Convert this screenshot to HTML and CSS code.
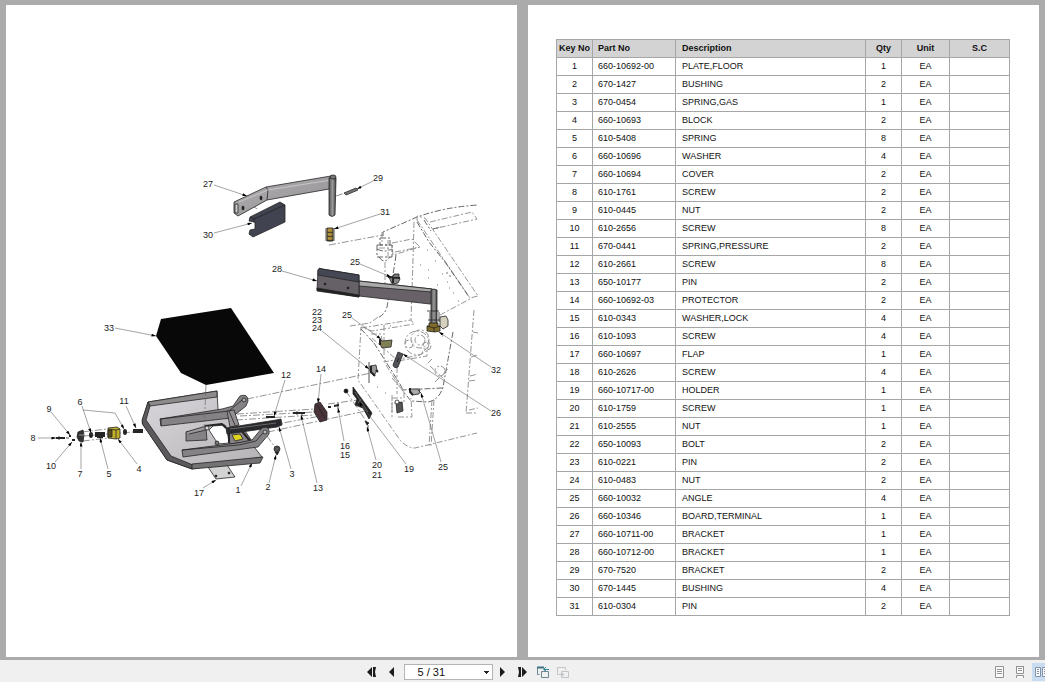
FILE: index.html
```html
<!DOCTYPE html>
<html lang="en">
<head>
<meta charset="utf-8">
<meta name="viewport" content="width=device-width, initial-scale=1">
<title>Parts manual</title>
<link rel="stylesheet" href="styles.css">
</head>
<body>
<main class="viewer">
<section class="page" aria-label="Exploded view">
<svg class="drawing" viewBox="6 5 511 652" role="img" aria-label="Exploded parts drawing">
  <defs>
    <marker id="arrow" viewBox="0 0 6 4" refX="6" refY="2" markerWidth="5" markerHeight="3" markerUnits="userSpaceOnUse" orient="auto"><path d="M0 0L6 2L0 4z"/></marker>
    <linearGradient id="steel" x1="0" y1="0" x2="1" y2="1"><stop offset="0" stop-color="#b3b0b3"/><stop offset="1" stop-color="#918e91"/></linearGradient>
    <linearGradient id="post"><stop offset="0" stop-color="#555"/><stop offset=".5" stop-color="#999"/><stop offset="1" stop-color="#444"/></linearGradient>
    <linearGradient id="floor" x1="0" y1="0" x2="1" y2="1"><stop offset="0" stop-color="#d9d7dc"/><stop offset="1" stop-color="#b5b2b4"/></linearGradient>
  </defs>

  <!-- machine frame -->
  <g class="frame">
    <path class="heavy" d="M383 236v-4L417 217Q445 207 478 205"/>
    <path d="M430 222L472 212L477 219L433 229M417 220L470 298L478 296L425 218L417 216z"/>
    <path class="heavy" d="M417 222L429 242L445 262L469 297M424 220L431 231M433 229l8-2"/>
    <path d="M414 222L413 260L411 320M392 243L412 239L420 247L393 255zM395 252l25-5M440 315L470 299"/>
    <path class="heavy" d="M377 245h15v12h-15zM380 238h10v7h-10zM379 257q5 8 11 0M377 249q7 4 15 0"/>
    <path d="M385 262v35M379 248h12M382 232v10M388 240v18"/>
    <path class="heavy" d="M396 255Q394 270 391 284L387 307Q384 316 377 318"/>
    <path d="M350 326L370 323L378 317M361 328L411 320L414 324L372 331L361 327L358 380L400 440Q407 448 415 448L477 433"/>
    <path class="heavy" d="M361 329L374 343M374 343L400 384L403 390M453 332L443 387Q439 400 428 402L411 401L402 390L442 388"/>
    <path d="M432 400L429 446M434 400L431 446M371 334h10l2 12M384 325v37L420 355L428 347L422 352M372 338l26 23L427 356v-8M397 367v27M392 378l12 14M404 392v11h-10M392 395v22M398 417h14l-1-19M386 365l14 22"/>
    <path d="M474 310L466 413M473 332l5 1M471 357l7-2M470 376l8-2M469 381l8-1M466 413h12M469 410l9-2"/>
    <circle cx="420" cy="339" r="9"/><circle cx="417" cy="343" r="12"/><circle cx="420" cy="340" r="5"/><circle cx="427" cy="346" r="4"/><circle cx="409" cy="344" r="4"/><circle cx="440" cy="371" r="5"/>
    <path d="M430 366L444 379M435 382L448 369M432 359l-6 6M392 402v10M392 398h12"/>
  </g>
  <g class="specks"><path d="M427 250h1M435 261h1M428 270h1M442 274h1M449 276h2M446 273h2M437 285h1M427 290h1M430 304h1M449 288h1M428 278h1M458 301h1M442 336h1M385 393h1M377 387h1M390 326h1M420 265h1M447 282h1M453 293h1"/></g>

  <!-- assembly axes -->
  <g class="axis">
    <path d="M329 245L383 235M336 196L345 193M247 399L371 373M237 414L315 409M240 416L314 412M236 420L314 415M272 425L326 415M268 432L370 410M328 404L358 400M267 436L277 450M257 209L252 205M84 436L145 431M82 432L107 429M83 441L108 438M346 391L368 424"/>
  </g>

  <!-- floor mat -->
  <path d="M161 319L231 308L274 373L206 385L181 373L156 336z" fill="#080808"/>

  <!-- upper arm with cover and pin -->
  <g class="part">
    <path d="M234 202L266 187L331 176L336 179L329 189L267 200L238 216L234 213z" fill="url(#steel)"/>
    <path d="M266 187L268 190L267 200" fill="none"/>
    <path d="M268 190L331 180M239 202L268 190" fill="none" stroke="#d0ced0"/>
    <path d="M235 204h3v9h-3z" fill="#ccc"/>
    <path d="M329 178v37q3 3 6 0l1-37q-3-4-7 0z" fill="url(#post)"/>
    <ellipse cx="333" cy="177" rx="3" ry="2" fill="#777"/>
    <path d="M250 217L280 202L285 205V222L253 237L249 234L250 230L255 229V222L249 221z" fill="#414450"/>
    <path d="M250 217L254 219L285 205M254 219V223" fill="none"/>
    <path d="M344 193L356 188L358 190L346 195z" fill="#777"/>
    <path d="M327 228h6v13h-6z" fill="#9c8032"/>
    <path d="M326 228v13M334 228v13M327 232q3 2 6 0M327 236q3 2 6 0M327 240q3 2 6 0" fill="none"/>
    <path d="M328 230h3M328 234h3M328 238h3" stroke="#d8b95c"/>
    <ellipse cx="243" cy="208" rx="1" ry="2" fill="#111"/><ellipse cx="261" cy="198" rx="1" ry="2" fill="#111"/>
  </g>

  <!-- lower arm -->
  <g class="part">
    <path d="M359 281L432 289L437 291L430 304L359 296z" fill="#686268"/>
    <path d="M359 281L432 289V292L359 286z" fill="#aaa"/>
    <path d="M318 270Q319 267 322 269L359 275V297L317 290z" fill="#666167"/>
    <path d="M318 270Q319 267 322 269L359 275V282L318 275z" fill="#454854"/>
    <path d="M317 288L359 295V297L317 291z" fill="#222"/>
    <path d="M431 290q3-2 6 0v34h-6z" fill="url(#post)"/>
    <path d="M427 311h12M428 320h13M430 312v12M439 312v10" fill="none"/>
    <path d="M440 317l6-1 2 4v6l-5 3-3-3z" fill="#d5d0bd"/>
    <path d="M429 323h9v3h2v5l-5 1-8-1v-5h2z" fill="#806b2b"/>
    <path d="M427 326l7 2 6-2M434 328v4" fill="none"/>
    <circle cx="325" cy="284" r="1" fill="#111"/><circle cx="348" cy="288" r="1" fill="#111"/>
  </g>

  <!-- small brackets in the frame -->
  <g class="part">
    <path d="M389 277h10l1 2-2 4-5 1-2-2z" fill="#888"/><path d="M388 277l12 1M393 278v5" stroke-width="2"/><path d="M393 277l1-3h5v3" fill="#777"/>
    <path d="M380 339l2 2 10-1-1 7-9 1-2-4z" fill="#817f55"/><path d="M380 339v6" stroke-width="2"/>
    <path d="M398 352l5 2-5 13q-4 2-5-2z" fill="#525358"/><path d="M399 358l-2 4" stroke="#111"/>
    <path d="M370 366l6-1 1 5-3 6-4-5z" fill="#999"/><path d="M371 366v6l4 4M376 370l2 2" fill="none" stroke-width="2"/><path d="M369 362v21"/>
    <path d="M410 389l2 6 7-1 1-5z" fill="#aaa"/><path d="M410 388v4l3 3" fill="none" stroke-width="2"/><path d="M418 390l3 3"/>
    <path d="M396 403l6-1 1 9-6 2z" fill="#555"/><circle cx="397" cy="402" r="2" fill="#fff"/>
    <path d="M353 387L372 413L369 419L363 408L355 405L357 399L353 394z" fill="#242424"/>
    <path d="M355 392l13 20M361 399l-3 4" stroke="#777"/>
    <circle cx="346" cy="391" r="2" fill="#111"/><path d="M365 421l4 2-2 2zM368 425v5" fill="#111"/>
  </g>

  <!-- floor plate assembly -->
  <g class="part">
    <path d="M208 467L227 465L235 477L216 479z" fill="#d4d3d4"/>
    <circle cx="216" cy="476" r="1"/><circle cx="229" cy="473" r="1"/>
    <path d="M148 402L217 391L218 409L236 424L262 457L192 469L167 460L142 423z" fill="url(#floor)"/>
    <path d="M148 402L217 391V397L150 406z" fill="#8e8b8d"/>
    <path d="M148 402L142 420L143 425L167 460L192 469L193 465L171 456L146 420L150 406z" fill="#5c595c"/>
    <path d="M192 464L263 457L260 463L192 469z" fill="#757275"/>
    <path d="M160 419L222 409L233 406L240 396Q248 393 248 401L246 406L231 418L161 426z" fill="#858286"/>
    <path d="M160 419L229 411L242 400M161 426V419" fill="none"/>
    <circle cx="244" cy="400" r="2" fill="#aaa"/>
    <path d="M227 434L243 428L252 441L230 444z" fill="#878287"/>
    <path d="M209 430L213 426L225 425L227 429L229 443L218 444z" fill="#fff"/>
    <path d="M205 426L222 424L226 428" fill="none" stroke-width="2"/>
    <path d="M186 432L206 428L207 440L186 441z" fill="#858286"/><path d="M186 432L206 426L206 430L189 434" fill="#9c999c"/>
    <circle cx="207" cy="428" r="2" fill="#ddd"/><circle cx="217" cy="443" r="2" fill="#777"/>
    <path d="M227 411L234 410L239 425L230 427z" fill="#938f93"/><path d="M229 411L235 425"/>
    <path d="M226 428L276 420L281 419L282 425L277 427L227 434z" fill="#292a2d"/><path d="M230 429L276 423" stroke="#777"/>
    <path d="M229 434v9M241 430l9 11" stroke-width="2"/>
    <path d="M232 435L240 434L243 439L235 441z" fill="#ddd321"/>
    <path d="M182 450L237 443L252 440L262 428Q270 425 269 434L258 447L183 457z" fill="#858286"/>
    <path d="M182 450L239 445L256 441L263 433" fill="none"/><circle cx="265" cy="432" r="2" fill="#bbb"/>
    <circle cx="277" cy="449" r="3" fill="#555"/><path d="M275 452l2 3 2-3" fill="#222"/><circle cx="277" cy="449" r="1" fill="#ddd"/>
    <path d="M315 404L320 402L327 412V420L320 422L314 412z" fill="#493238"/><path d="M317 405L325 418"/>
  </g>
  <g class="axis"><path d="M206 385L204 433"/></g>

  <!-- screws, springs and washers -->
  <g class="part">
    <path d="M266 417h9M293 413h12M328 407h3M334 406l5-1" stroke-width="2"/><path d="M297 411v4M302 412v4M338 403v6"/>
    <path d="M56 438h9M70 435v2M72 440h3" stroke-width="2"/><path d="M59 436v4M66 438h3"/>
    <path d="M78 432l5-2 1 5-1 7-4-1-2-4z" fill="#333"/><path d="M79 435h5" stroke="#aaa"/>
    <ellipse cx="91" cy="435" rx="1" ry="2" stroke-width="2"/>
    <path d="M96 432v5M98 432v6M100 432v6M102 432v6M104 432v5" stroke-width="2"/>
    <path d="M108 428l9-1 3 2v9l-4 1-8-1z" fill="#c1ae29"/><path d="M108 429l8 1 4-1M116 430v9" fill="none"/><path d="M108 430h4v7h-4z" fill="#544c1a"/>
    <ellipse cx="125" cy="432" rx="1" ry="2" stroke-width="2"/>
    <path d="M134 429v4M136 429v4M138 429v4M140 429v4M142 429v4" stroke-width="2"/>
  </g>

  <!-- leaders -->
  <g class="leader">
    <path d="M214 185L247 196"/><path d="M373 181L357 189"/><path d="M380 214L334 229"/><path d="M214 233L252 223"/>
    <path d="M282 271L317 281"/><path d="M360 264L391 277"/><path d="M352 318L381 339"/><path d="M322 331L369 369"/>
    <path d="M115 328L156 336"/><path d="M321 374L318 403"/><path d="M285 380L274 416"/><path d="M126 406L136 428"/>
    <path d="M82 406L91 433"/><path d="M83 410L115 413L124 429"/><path d="M51 412L70 435"/><path d="M38 438H56"/>
    <path d="M55 462L72 442"/><path d="M81 469V442"/><path d="M108 469L100 438"/><path d="M137 464L118 439"/>
    <path d="M203 488L216 480"/><path d="M241 486L252 463"/><path d="M269 483L276 455"/><path d="M291 469L279 427"/>
    <path d="M317 483L301 415"/><path d="M344 441L338 408"/><path d="M376 460L367 427"/><path d="M406 464L359 402"/>
    <path d="M441 462L421 393"/><path d="M491 411L403 354"/><path d="M491 367L439 332"/>
  </g>

  <g class="labels">
    <text x="208" y="187">27</text><text x="378" y="181">29</text><text x="385" y="215">31</text><text x="208" y="238">30</text>
    <text x="277" y="272">28</text><text x="355" y="265">25</text><text x="347" y="318">25</text>
    <text x="317" y="315">22</text><text x="317" y="323">23</text><text x="317" y="331">24</text>
    <text x="109" y="331">33</text><text x="321" y="372">14</text><text x="286" y="378">12</text><text x="124" y="404">11</text>
    <text x="80" y="405">6</text><text x="49" y="412">9</text><text x="33" y="441">8</text><text x="51" y="469">10</text>
    <text x="80" y="477">7</text><text x="109" y="477">5</text><text x="139" y="472">4</text><text x="199" y="496">17</text>
    <text x="238" y="493">1</text><text x="268" y="490">2</text><text x="292" y="477">3</text><text x="318" y="491">13</text>
    <text x="345" y="449">16</text><text x="345" y="458">15</text><text x="377" y="468">20</text><text x="377" y="478">21</text>
    <text x="409" y="472">19</text><text x="443" y="470">25</text><text x="496" y="416">26</text><text x="496" y="373">32</text>
  </g>
</svg>
</section>

<section class="page page-list" aria-label="Parts list">
<table class="parts">
<colgroup><col class="c-key"><col class="c-part"><col class="c-desc"><col class="c-qty"><col class="c-unit"><col class="c-sc"></colgroup>
<thead><tr><th>Key No</th><th>Part No</th><th>Description</th><th>Qty</th><th>Unit</th><th>S.C</th></tr></thead>
<tbody>
<tr><td>1</td><td>660-10692-00</td><td>PLATE,FLOOR</td><td>1</td><td>EA</td><td></td></tr>
<tr><td>2</td><td>670-1427</td><td>BUSHING</td><td>2</td><td>EA</td><td></td></tr>
<tr><td>3</td><td>670-0454</td><td>SPRING,GAS</td><td>1</td><td>EA</td><td></td></tr>
<tr><td>4</td><td>660-10693</td><td>BLOCK</td><td>2</td><td>EA</td><td></td></tr>
<tr><td>5</td><td>610-5408</td><td>SPRING</td><td>8</td><td>EA</td><td></td></tr>
<tr><td>6</td><td>660-10696</td><td>WASHER</td><td>4</td><td>EA</td><td></td></tr>
<tr><td>7</td><td>660-10694</td><td>COVER</td><td>2</td><td>EA</td><td></td></tr>
<tr><td>8</td><td>610-1761</td><td>SCREW</td><td>2</td><td>EA</td><td></td></tr>
<tr><td>9</td><td>610-0445</td><td>NUT</td><td>2</td><td>EA</td><td></td></tr>
<tr><td>10</td><td>610-2656</td><td>SCREW</td><td>8</td><td>EA</td><td></td></tr>
<tr><td>11</td><td>670-0441</td><td>SPRING,PRESSURE</td><td>2</td><td>EA</td><td></td></tr>
<tr><td>12</td><td>610-2661</td><td>SCREW</td><td>8</td><td>EA</td><td></td></tr>
<tr><td>13</td><td>650-10177</td><td>PIN</td><td>2</td><td>EA</td><td></td></tr>
<tr><td>14</td><td>660-10692-03</td><td>PROTECTOR</td><td>2</td><td>EA</td><td></td></tr>
<tr><td>15</td><td>610-0343</td><td>WASHER,LOCK</td><td>4</td><td>EA</td><td></td></tr>
<tr><td>16</td><td>610-1093</td><td>SCREW</td><td>4</td><td>EA</td><td></td></tr>
<tr><td>17</td><td>660-10697</td><td>FLAP</td><td>1</td><td>EA</td><td></td></tr>
<tr><td>18</td><td>610-2626</td><td>SCREW</td><td>4</td><td>EA</td><td></td></tr>
<tr><td>19</td><td>660-10717-00</td><td>HOLDER</td><td>1</td><td>EA</td><td></td></tr>
<tr><td>20</td><td>610-1759</td><td>SCREW</td><td>1</td><td>EA</td><td></td></tr>
<tr><td>21</td><td>610-2555</td><td>NUT</td><td>1</td><td>EA</td><td></td></tr>
<tr><td>22</td><td>650-10093</td><td>BOLT</td><td>2</td><td>EA</td><td></td></tr>
<tr><td>23</td><td>610-0221</td><td>PIN</td><td>2</td><td>EA</td><td></td></tr>
<tr><td>24</td><td>610-0483</td><td>NUT</td><td>2</td><td>EA</td><td></td></tr>
<tr><td>25</td><td>660-10032</td><td>ANGLE</td><td>4</td><td>EA</td><td></td></tr>
<tr><td>26</td><td>660-10346</td><td>BOARD,TERMINAL</td><td>1</td><td>EA</td><td></td></tr>
<tr><td>27</td><td>660-10711-00</td><td>BRACKET</td><td>1</td><td>EA</td><td></td></tr>
<tr><td>28</td><td>660-10712-00</td><td>BRACKET</td><td>1</td><td>EA</td><td></td></tr>
<tr><td>29</td><td>670-7520</td><td>BRACKET</td><td>2</td><td>EA</td><td></td></tr>
<tr><td>30</td><td>670-1445</td><td>BUSHING</td><td>4</td><td>EA</td><td></td></tr>
<tr><td>31</td><td>610-0304</td><td>PIN</td><td>2</td><td>EA</td><td></td></tr>
</tbody>
</table>
</section>
</main>

<footer class="toolbar">
  <nav class="pager" aria-label="Page navigation">
    <button class="tool" type="button" aria-label="First page"><svg width="12" height="12"><path d="M6 1v10L1 6zM7 1h3L9 6l1 5H7z"/></svg></button>
    <button class="tool" type="button" aria-label="Previous page"><svg width="12" height="12"><path d="M8 1v10L3 6z"/></svg></button>
    <select class="page-select" aria-label="Page"><option>5 / 31</option></select>
    <button class="tool" type="button" aria-label="Next page"><svg width="12" height="12"><path d="M3 1v10L8 6z"/></svg></button>
    <button class="tool" type="button" aria-label="Last page"><svg width="12" height="12"><path d="M1 1h3v10H1l1-5zM5 1v10l5-5z"/></svg></button>
    <button class="tool" type="button" aria-label="Previous view"><svg width="14" height="12" fill="none" stroke="#6c8794"><path d="M3.500 8.500H1.500V1.500H8M5.500 5.500h7v6h-7z"/><path d="M1 1.500h7" stroke="#3f7282" stroke-width="2"/><path d="M8 3.500h5M10 1l-2.500 2.500L10 5" stroke="#2f8295"/></svg></button>
    <button class="tool" type="button" aria-label="Next view"><svg width="14" height="12" fill="none" stroke="#c3c6c9"><path d="M4 8.500H1.500V1.500H9.500V4M5.500 5.500h7v6h-7z"/><path d="M3 8.500h5M6 7l2 1.500L6 10"/></svg></button>
  </nav>
  <div class="layouts" role="group" aria-label="Page layout">
    <button class="tool" type="button" aria-label="Single page"><svg width="10" height="12" fill="none" stroke="#929292"><path d="M.5 .5h8v11h-8z" fill="#fafafa"/><path d="M2 3.500h5M2 5.500h5M2 7.500h5"/></svg></button>
    <button class="tool" type="button" aria-label="Continuous"><svg width="10" height="12" fill="none" stroke="#929292"><path d="M1.500 0v7.500h7V0M1.500 12V9.500h7V12" fill="#fafafa"/><path d="M1 .5h8M3 2.500h4M3 4.500h4"/></svg></button>
    <button class="tool active" type="button" aria-label="Facing pages"><svg width="14" height="12" fill="none" stroke="#8492a3"><path d="M.5 1.500h5v9h-5zM7.500 1.500h6v9h-6z" fill="#f6f9fc"/><path d="M2 3.500h2M2 5.500h2M2 7.500h2M9 3.500h3M9 5.500h3M9 7.500h3"/></svg></button>
  </div>
</footer>
</body>
</html>
```
FILE: styles.css
```css
* { box-sizing: border-box; }
body {
  margin: 0;
  min-height: 100vh;
  display: flex;
  flex-direction: column;
  background: #ababab;
  font-family: "Liberation Sans", Arial, sans-serif;
  color: #111;
}
.viewer {
  flex: 1;
  display: grid;
  grid-template-columns: 1fr 1fr;
  gap: 11px;
  padding: 5px 6px 3px;
}
.page { background: #fff; min-width: 0; }
.page-list { padding: 34px 29px 36px 28px; }

.drawing { display: block; width: 100%; }
.frame { fill: none; stroke: #969696; stroke-width: 1; stroke-dasharray: 6 2 2 2; }
.frame .heavy { stroke: #666; }
.specks { stroke: #777; fill: none; }
.axis { fill: none; stroke: #666; stroke-width: .7; stroke-dasharray: 7 2 2 2; }
.part { stroke: #252525; stroke-width: .8; stroke-linejoin: round; }
.leader { fill: none; stroke: #666; stroke-width: .6; }
.leader path { marker-end: url(#arrow); }
.labels { font-size: 9px; text-anchor: middle; fill: #222; }

.parts {
  width: 100%;
  border-collapse: collapse;
  table-layout: fixed;
  font-size: 9px;
  line-height: 17px;
}
.parts th, .parts td {
  height: 18px;
  padding: 0;
  border: 1px solid #a6a6a6;
  text-align: center;
  white-space: nowrap;
}
.parts th { background: #d3d3d3; }
.parts tr > :nth-child(2) { text-align: left; padding-left: 5px; }
.parts tr > :nth-child(3) { text-align: left; padding-left: 6px; }
.c-key, .c-qty { width: 36px; }
.c-part { width: 83px; }
.c-unit { width: 48px; }
.c-sc { width: 60px; }

.toolbar {
  display: flex;
  justify-content: space-between;
  align-items: center;
  height: 22px;
  padding: 2px 0 0 34.6%;
  background: #f0f0f0;
  overflow: hidden;
}
.pager, .layouts { display: flex; align-items: center; }
.tool {
  display: flex;
  align-items: center;
  justify-content: center;
  width: 20px;
  height: 18px;
  padding: 0;
  border: 0;
  background: none;
  fill: #1c1c1c;
}
.tool svg { flex: none; }
.tool.active {
  width: 13px;
  margin-left: 2px;
  padding-left: 3px;
  justify-content: flex-start;
  overflow: hidden;
  background: #c9dcf2;
}
.page-select {
  appearance: none;
  width: 89px;
  height: 16px;
  margin: 0 0 0 2px;
  padding: 0 0 0 13px;
  border: 1px solid #b4b4b4;
  border-radius: 0;
  background:
    linear-gradient(#222, #222) right 3px top 6px / 5px 1px no-repeat,
    linear-gradient(#222, #222) right 4px top 7px / 3px 1px no-repeat,
    linear-gradient(#222, #222) right 5px top 8px / 1px 1px no-repeat,
    #fff;
  font: 11px/14px "Liberation Sans", Arial, sans-serif;
  color: #111;
}
```
